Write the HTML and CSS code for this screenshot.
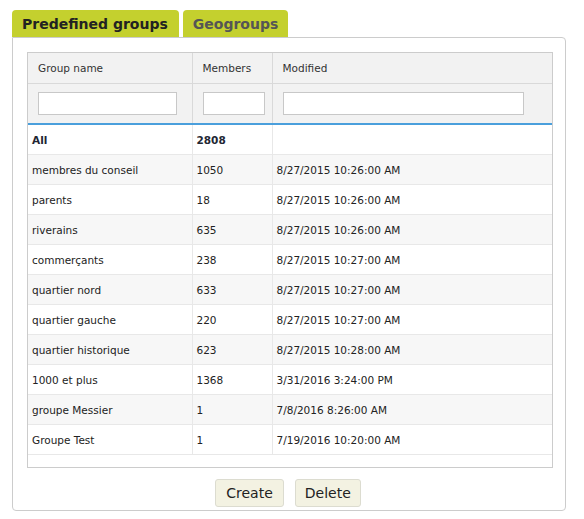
FILE: index.html
```html
<!DOCTYPE html>
<html>
<head>
<meta charset="utf-8">
<link rel="stylesheet" href="styles.css">
</head>
<body>
<div class="wrap">
  <div class="tabs">
    <div class="tab active">Predefined groups</div>
    <div class="tab">Geogroups</div>
  </div>
  <div class="panel">
    <div class="grid">
      <table>
        <colgroup>
          <col class="c1"><col class="c2"><col class="c3">
        </colgroup>
        <thead>
          <tr class="hrow"><th>Group name</th><th>Members</th><th>Modified</th></tr>
          <tr class="frow">
            <td><input class="f1" type="text"></td>
            <td><input class="f2" type="text"></td>
            <td><input class="f3" type="text"></td>
          </tr>
        </thead>
        <tbody>
          <tr class="total"><td>All</td><td>2808</td><td></td></tr>
          <tr><td>membres du conseil</td><td>1050</td><td>8/27/2015 10:26:00 AM</td></tr>
          <tr><td>parents</td><td>18</td><td>8/27/2015 10:26:00 AM</td></tr>
          <tr><td>riverains</td><td>635</td><td>8/27/2015 10:26:00 AM</td></tr>
          <tr><td>commerçants</td><td>238</td><td>8/27/2015 10:27:00 AM</td></tr>
          <tr><td>quartier nord</td><td>633</td><td>8/27/2015 10:27:00 AM</td></tr>
          <tr><td>quartier gauche</td><td>220</td><td>8/27/2015 10:27:00 AM</td></tr>
          <tr><td>quartier historique</td><td>623</td><td>8/27/2015 10:28:00 AM</td></tr>
          <tr><td>1000 et plus</td><td>1368</td><td>3/31/2016 3:24:00 PM</td></tr>
          <tr><td>groupe Messier</td><td>1</td><td>7/8/2016 8:26:00 AM</td></tr>
          <tr><td>Groupe Test</td><td>1</td><td>7/19/2016 10:20:00 AM</td></tr>
        </tbody>
      </table>
    </div>
    <div class="actions">
      <button class="btn">Create</button>
      <button class="btn btn-del">Delete</button>
    </div>
  </div>
</div>
</body>
</html>
```

FILE: styles.css
```css
html, body {
  margin: 0;
  padding: 0;
  background: #ffffff;
}
body {
  font-family: "DejaVu Sans", Verdana, sans-serif;
  color: #222;
}
.wrap {
  width: 554px;
  margin: 10px 0 0 12px;
}
.tabs {
  display: flex;
  gap: 4px;
}
.tab {
  height: 27px;
  line-height: 28px;
  padding: 0 10px 0 10px;
  background: #c4d02e;
  border-radius: 4px 4px 0 0;
  font-weight: bold;
  font-size: 14px;
  color: #555555;
  box-sizing: border-box;
}
.tab.active {
  color: #222222;
  padding-right: 11px;
}
.panel {
  border: 1px solid #cccccc;
  border-radius: 0 4px 4px 4px;
  padding: 14px 12px 3px 14px;
}
.grid {
  border: 1px solid #cccccc;
  height: 416px;
  box-sizing: border-box;
  background: #ffffff;
  overflow: hidden;
}
table {
  border-collapse: collapse;
  width: 524px;
  table-layout: fixed;
  font-size: 10.5px;
}
col.c1 { width: 164px; }
col.c2 { width: 80px; }
col.c3 { width: 280px; }
th, td {
  padding: 0;
  text-align: left;
  white-space: nowrap;
  overflow: hidden;
}
.hrow th {
  background: #f2f2f2;
  height: 30px;
  font-weight: normal;
  color: #333;
  padding-left: 10px;
  border-bottom: 1px solid #d9d9d9;
  border-right: 1px solid #d9d9d9;
}
.frow td {
  background: #f2f2f2;
  height: 39px;
  padding-left: 10px;
  border-right: 1px solid #d9d9d9;
  border-bottom: 2px solid #4a9fdc;
}
input {
  display: block;
  height: 23px;
  box-sizing: border-box;
  border: 1px solid #c8c8c8;
  background: #ffffff;
  margin: 0;
  padding: 0 4px;
}
.f1 { width: 139px; }
.f2 { width: 62px; }
.f3 { width: 241px; }
tbody td {
  height: 29px;
  padding-left: 4px;
  border-bottom: 1px solid #e8e8e8;
  border-right: 1px solid #e8e8e8;
  color: #222;
}
tbody tr:nth-child(even) td {
  background: #f7f7f7;
}
tr.total td {
  font-weight: bold;
  color: #222633;
}
.actions {
  display: flex;
  justify-content: center;
  gap: 11px;
  margin-top: 11px;
  padding-right: 4px;
}
.btn {
  height: 28px;
  padding: 0 10px;
  font-family: "DejaVu Sans", Verdana, sans-serif;
  font-size: 14px;
  color: #222;
  background: #f3f2e2;
  border: 1px solid #dcdcd0;
  border-radius: 3px;
}
.btn-del {
  padding: 0 9px;
}
```
